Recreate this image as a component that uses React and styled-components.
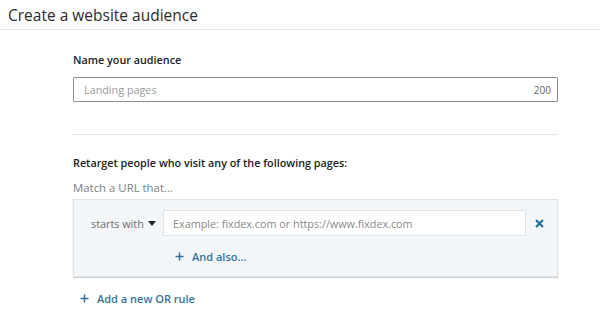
import React from 'react';
import styled, { createGlobalStyle } from 'styled-components';

const GlobalStyle = createGlobalStyle`
  body {
    margin: 0;
    background: #fff;
    font-family: "Open Sans", "Noto Sans", sans-serif;
    color: #333;
  }
`;

const Page = styled.div`
  width: 600px;
  height: 314px;
  overflow: hidden;
`;

const Header = styled.header`
  height: 30px;
  border-bottom: 1px solid #e6e9ec;
  display: flex;
  align-items: center;
  padding-left: 8px;
  box-sizing: border-box;
`;

const Title = styled.h1`
  margin: 0;
  font-size: 15.5px;
  font-weight: 400;
  color: #2b2b2b;
`;

const Body = styled.main`
  width: 485px;
  margin-left: 73px;
  padding-top: 22px;
`;

const Label = styled.div`
  font-size: 10.8px;
  font-weight: 600;
  color: #222;
  margin-bottom: 10px;
`;

const Hint = styled.div`
  font-size: 11.4px;
  color: #808080;
  margin-bottom: 4px;
`;

const TextField = styled.div`
  height: 25px;
  box-sizing: border-box;
  border: 1px solid #8f8f8f;
  border-radius: 1px;
  display: flex;
  align-items: center;
  justify-content: space-between;
  padding: 0 6px 0 10px;
  font-size: 10.8px;
  color: #9b9b9b;
`;

const Counter = styled.span`
  color: #666;
  font-size: 10px;
`;

const Divider = styled.hr`
  border: 0;
  border-top: 1px solid #e3e3e3;
  margin: 32px 0 20px;
`;

const RuleBox = styled.div`
  background: #f3f6f8;
  border: 1px solid #dfe3e6;
  box-shadow: 0 1px 1px rgba(0, 0, 0, 0.18);
  padding: 10px 0 0;
  height: 78px;
  box-sizing: border-box;
`;

const RuleRow = styled.div`
  display: flex;
  align-items: center;
  padding-left: 17px;
`;

const Select = styled.div`
  display: flex;
  align-items: center;
  gap: 4px;
  font-size: 10.8px;
  color: #6d6d6d;
  width: 72px;
`;

const Caret = styled.span`
  width: 0;
  height: 0;
  border-left: 4px solid transparent;
  border-right: 4px solid transparent;
  border-top: 5px solid #222;
  margin-top: 1px;
`;

const UrlInput = styled.div`
  width: 363px;
  height: 26px;
  box-sizing: border-box;
  background: #fff;
  border: 1px solid #e1e4e6;
  display: flex;
  align-items: center;
  padding-left: 9px;
  font-size: 10.8px;
  color: #8a8a8a;
`;

const Remove = styled.span`
  margin-left: 9px;
  display: flex;
  align-items: center;
`;

const LinkButton = styled.div`
  display: flex;
  align-items: center;
  gap: 8px;
  font-size: 11px;
  font-weight: 600;
  color: #35739a;
  padding-left: ${p => p.$indent || 0}px;
  margin-top: ${p => p.$top || 0}px;
`;

const Plus = () => (
  <svg width="9" height="9" viewBox="0 0 9 9">
    <path d="M4.5 0.5v8M0.5 4.5h8" stroke="#35739a" strokeWidth="1.5" />
  </svg>
);

const Cross = () => (
  <svg width="9" height="9" viewBox="0 0 9 9">
    <path d="M1 1l7 7M8 1l-7 7" stroke="#1e6a93" strokeWidth="2" />
  </svg>
);

export default function App() {
  return (
    <Page>
      <GlobalStyle />
      <Header>
        <Title>Create a website audience</Title>
      </Header>
      <Body>
        <Label>Name your audience</Label>
        <TextField>
          Landing pages
          <Counter>200</Counter>
        </TextField>
        <Divider />
        <Label>Retarget people who visit any of the following pages:</Label>
        <Hint>Match a URL that...</Hint>
        <RuleBox>
          <RuleRow>
            <Select>
              starts with <Caret />
            </Select>
            <UrlInput>Example: fixdex.com or https://www.fixdex.com</UrlInput>
            <Remove><Cross /></Remove>
          </RuleRow>
          <LinkButton $indent={101} $top={13}>
            <Plus /> And also...
          </LinkButton>
        </RuleBox>
        <LinkButton $indent={7} $top={14}>
          <Plus /> Add a new OR rule
        </LinkButton>
      </Body>
    </Page>
  );
}
